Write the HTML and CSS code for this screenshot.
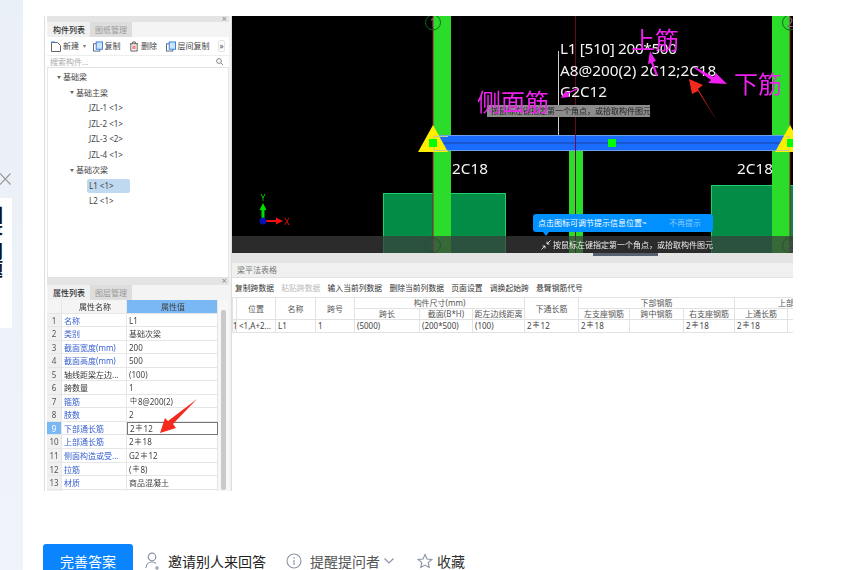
FILE: index.html
```html
<!doctype html>
<html lang="zh-CN">
  <head>
    <meta charset="UTF-8" />
    <meta name="viewport" content="width=device-width, initial-scale=1.0" />
    <title>完善答案</title>
    <link rel="stylesheet" href="styles.css">
  </head>
  <body>
    <div class="page">
      <aside class="side">
        <svg class="side-close" width="11" height="12" viewBox="0 0 11 12"><path d="M0 .5l10.500 11M10.500 .5L0 11.500" stroke="#999" stroke-width="1.100"/></svg>
        <div class="side-card"><span class="side-title">回答问题</span></div>
      </aside>

      <main class="main">
        <div class="shot">
          <!-- left column -->
          <div class="left-col">
            <section class="tree-panel">
              <div class="panel-grip"><span class="grip-x">×</span></div>
              <div class="tabs">
                <span class="tab tab-on">构件列表</span>
                <span class="tab">图纸管理</span>
              </div>
              <div class="tools">
                <span class="tool">
                  <svg width="10" height="11" viewBox="0 0 10 11"><path d="M.5 1.500h6l3 3v6h-9z" fill="#fff" stroke="#666"/><path d="M0 1h4" stroke="#2a8ae0"/></svg>
                  新建
                </span>
                <span class="tool-drop">▾</span>
                <span class="tool">
                  <svg width="10" height="11" viewBox="0 0 11 11"><rect x="0.5" y="2.5" width="7" height="8" fill="#fff" stroke="#567"/><rect x="3.5" y="0.5" width="7" height="8" fill="#cfe3fa" stroke="#2a7ae0"/></svg>
                  复制
                </span>
                <span class="tool">
                  <svg width="10" height="11" viewBox="0 0 11 11"><path d="M1 2.500h9M4 2.500v-2h3v2M2 2.500v8h7v-8" fill="none" stroke="#555"/><path d="M4.500 4.500v4M6.500 4.500v4" stroke="#d22"/></svg>
                  删除
                </span>
                <span class="tool">
                  <svg width="10" height="11" viewBox="0 0 11 11"><rect x="0.5" y="2.5" width="7" height="8" fill="#fff" stroke="#567"/><rect x="3.5" y="0.5" width="7" height="8" fill="#cfe3fa" stroke="#2a7ae0"/></svg>
                  层间复制
                </span>
                <span class="tool-more">»</span>
              </div>
              <div class="search">
                <span>搜索构件...</span>
                <svg width="7" height="7" viewBox="0 0 7 7"><circle cx="3" cy="3" r="2.400" fill="none" stroke="#888"/><path d="M5 5l2 2" stroke="#888"/></svg>
              </div>
              <ul class="tree">
                <li class="lv1"><i class="caret"></i>基础梁</li>
                <li class="lv2"><i class="caret"></i>基础主梁</li>
                <li class="lv3"><span>JZL-1 &lt;1&gt;</span></li>
                <li class="lv3"><span>JZL-2 &lt;1&gt;</span></li>
                <li class="lv3"><span>JZL-3 &lt;2&gt;</span></li>
                <li class="lv3"><span>JZL-4 &lt;1&gt;</span></li>
                <li class="lv2"><i class="caret"></i>基础次梁</li>
                <li class="lv3"><span class="picked">L1 &lt;1&gt;</span></li>
                <li class="lv3"><span>L2 &lt;1&gt;</span></li>
              </ul>
            </section>

            <section class="prop-panel">
              <div class="panel-grip prop-grip"><span class="grip-x">×</span></div>
              <div class="tabs">
                <span class="tab tab-on">属性列表</span>
                <span class="tab">图层管理</span>
              </div>
              <div class="prop-body">
                <div class="prop-grid">
                  <div class="c-num c-head"></div>
                  <div class="c-name c-head">属性名称</div>
                  <div class="c-val c-head-blue">属性值</div>

                  <div class="c-num">1</div><div class="c-name link">名称</div><div class="c-val">L1</div>
                  <div class="c-num">2</div><div class="c-name link">类别</div><div class="c-val">基础次梁</div>
                  <div class="c-num">3</div><div class="c-name link">截面宽度(mm)</div><div class="c-val">200</div>
                  <div class="c-num">4</div><div class="c-name link">截面高度(mm)</div><div class="c-val">500</div>
                  <div class="c-num">5</div><div class="c-name">轴线距梁左边...</div><div class="c-val">(100)</div>
                  <div class="c-num">6</div><div class="c-name">跨数量</div><div class="c-val">1</div>
                  <div class="c-num">7</div><div class="c-name link">箍筋</div><div class="c-val"><small>中</small>8@200(2)</div>
                  <div class="c-num">8</div><div class="c-name link">肢数</div><div class="c-val">2</div>
                  <div class="c-num c-num-on">9</div><div class="c-name link">下部通长筋</div><div class="c-val c-val-on">2<small>丰</small>12</div>
                  <div class="c-num">10</div><div class="c-name link">上部通长筋</div><div class="c-val">2<small>丰</small>18</div>
                  <div class="c-num">11</div><div class="c-name link">侧面构造或受...</div><div class="c-val">G2<small>丰</small>12</div>
                  <div class="c-num">12</div><div class="c-name link">拉筋</div><div class="c-val">(<small>丰</small>8)</div>
                  <div class="c-num">13</div><div class="c-name link">材质</div><div class="c-val">商品混凝土</div>
                  <div class="c-num"></div><div class="c-name"></div><div class="c-val"></div>
                </div>
                <div class="prop-scroll"><div class="prop-thumb"></div></div>
              </div>
              <svg class="prop-arrow" width="40" height="36" viewBox="0 0 40 36"><path d="M38 1L14 26l3 4L1 35l5-15 3 3z" fill="#f42a1e"/></svg>
            </section>
          </div>

          <!-- right column -->
          <div class="right-col">
            <div class="cad">
              <svg class="cad-svg" width="562" height="237" viewBox="231 16 562 237">
                <rect x="231" y="16" width="562" height="237" fill="#000"/>
                <rect x="383.500" y="193.500" width="122" height="60" fill="#038c45" stroke="#1fd068"/>
                <rect x="711.500" y="185.500" width="82" height="68" fill="#038c45" stroke="#1fd068"/>
                <rect x="433" y="16" width="18" height="237" fill="#2bdc2b"/>
                <rect x="772" y="16" width="18" height="237" fill="#2bdc2b"/>
                <rect x="569" y="151" width="14" height="102" fill="#2bdc2b"/>
                <path d="M433 16v237M790 16v237" stroke="#a01030"/>
                <path d="M575.500 16v237" stroke="#6a0a1a"/>
                <path d="M558.500 51v84" stroke="#ccc"/>
                <circle cx="433" cy="22.500" r="7.500" fill="none" stroke="#0c6a1c"/>
                <text class="cad-axis" x="433" y="27" text-anchor="middle">1</text>
                <circle cx="790" cy="22.500" r="7.500" fill="none" stroke="#0c6a1c"/>
                <text class="cad-axis" x="790" y="27" text-anchor="middle">2</text>
                <circle cx="433" cy="245.500" r="7.500" fill="none" stroke="#0c6a1c"/>
                <text class="cad-axis" x="433" y="250" text-anchor="middle">1</text>
                <circle cx="790" cy="245.500" r="7.500" fill="none" stroke="#0c6a1c"/>
                <text class="cad-axis" x="790" y="250" text-anchor="middle">2</text>

                <rect x="434.500" y="135.500" width="360" height="15" fill="#1a6cff" stroke="#6aa0e8"/>
                <path d="M434 143h360" stroke="#14409a"/>
                <path d="M575.500 135v16" stroke="#6a0a5a"/>
                <path d="M433 125l15 27h-30z" fill="#ffee00"/>
                <path d="M790 125l15 27h-30z" fill="#ffee00"/>
                <path d="M448 136.500h-14v14h14" fill="none" stroke="#b8c8a0"/>
                <path d="M776 150.500h13v-14h-3" fill="none" stroke="#b8c8a0"/>
                <rect x="429" y="139" width="8" height="8" fill="#00ff00"/>
                <rect x="608" y="139" width="8" height="8" fill="#00ff00"/>
                <rect x="787" y="139" width="8" height="8" fill="#00ff00"/>

                <text class="cad-note" x="452" y="174">2C18</text>
                <text class="cad-note" x="737" y="174">2C18</text>
                <text class="cad-note" x="560" y="54" textLength="117">L1 [510] 200*500</text>
                <text class="cad-note" x="560" y="76">A8@200(2) 2C12;2C18</text>
                <text class="cad-note" x="560" y="97">G2C12</text>

                <rect x="487" y="105" width="163" height="12" fill="#8c8c8c"/>
                <text class="cad-hint" x="491" y="114">按鼠标左键指定第一个角点，或拾取构件图元</text>

                <text class="cad-mark" x="477" y="111">侧面筋</text>
                <text class="cad-mark" x="631" y="49">上筋</text>
                <text class="cad-mark" x="734" y="93">下筋</text>
                <path d="M658 75l-5-13 3-1-6-10-2 13 3-1 5 13zM695 67l19 10 2-4 11 11-19-1 3-3-17-12zM578 89l-10 5 1 3-8 1 5-8 1 3 10-5z" fill="#f01ef0"/>
                <path d="M717 121L698 91l-6 3-3-15 14 6-5 4z" fill="#f42a1e"/>

                <path d="M263 221v-13" stroke="#00e000" stroke-width="3"/>
                <path d="M263 203l3.500 7h-7z" fill="#00e000"/>
                <path d="M263 221h14" stroke="#f01010" stroke-width="2"/>
                <path d="M283 221l-7 3.500v-7z" fill="#f01010"/>
                <circle cx="263" cy="221" r="3.500" fill="#0a10b0"/>
                <text class="cad-y" x="263" y="201" text-anchor="middle">Y</text>
                <text class="cad-x" x="287" y="225" text-anchor="middle">X</text>
              </svg>
              <div class="status">
                <svg width="10" height="10" viewBox="0 0 10 10"><path d="M9.500 .5L6 4M6 1.500V4h2.500M.5 9.500L4 6M1.500 6H4v2.500" fill="none" stroke="#fff" stroke-width=".8"/></svg>
                <span>按鼠标左键指定第一个角点，或拾取构件图元</span>
              </div>
              <div class="tip">
                <span>点击图标可调节提示信息位置~</span>
                <span class="tip-off">不再提示</span>
              </div>
            </div>

            <div class="split"><span class="split-thumb"></span></div>
            <div class="grid-title">梁平法表格</div>
            <div class="grid-tools">
              <span>复制跨数据</span>
              <span class="off">粘贴跨数据</span>
              <span>输入当前列数据</span>
              <span>删除当前列数据</span>
              <span>页面设置</span>
              <span>调换起始跨</span>
              <span>悬臂钢筋代号</span>
            </div>
            <table class="beam">
              <colgroup>
                <col class="w4"><col class="w39"><col class="w40"><col class="w39">
                <col class="w65"><col class="w53"><col class="w52"><col class="w54">
                <col class="w51"><col class="w54"><col class="w51"><col class="w53"><col class="w6">
              </colgroup>
              <tr class="head">
                <th rowspan="2"></th>
                <th rowspan="2" class="big">位置</th>
                <th rowspan="2" class="big">名称</th>
                <th rowspan="2" class="big">跨号</th>
                <th colspan="3">构件尺寸(mm)</th>
                <th rowspan="2" class="big">下通长筋</th>
                <th colspan="3">下部钢筋</th>
                <th colspan="2" class="cut">上部钢筋</th>
              </tr>
              <tr class="head">
                <th>跨长</th><th>截面(B*H)</th><th>距左边线距离</th>
                <th>左支座钢筋</th><th>跨中钢筋</th><th>右支座钢筋</th>
                <th>上通长筋</th><th></th>
              </tr>
              <tr class="data">
                <td>1</td><td>&lt;1,A+2...</td><td>L1</td><td>1</td>
                <td>(5000)</td><td>(200*500)</td><td>(100)</td>
                <td>2<small>丰</small>12</td><td>2<small>丰</small>18</td><td></td>
                <td>2<small>丰</small>18</td><td>2<small>丰</small>18</td><td></td>
              </tr>
            </table>
          </div>
        </div>

        <div class="actions">
          <button class="btn-main">完善答案</button>
          <span class="act act-invite">
            <svg width="16" height="18" viewBox="0 0 16 18"><circle cx="7" cy="5" r="3.800" fill="none" stroke="#8a93a5" stroke-width="1.200"/><path d="M1 16c0-4 3-6 6-6 1.500 0 3 .5 4 1.500M12 14v4M10 16h4" fill="none" stroke="#8a93a5" stroke-width="1.200"/></svg>
            邀请别人来回答
          </span>
          <span class="act act-remind">
            <svg width="16" height="16" viewBox="0 0 16 16"><circle cx="8" cy="8" r="7" fill="none" stroke="#8a93a5" stroke-width="1.100"/><path d="M8 7v5M8 4v1.500" stroke="#8a93a5" stroke-width="1.100"/></svg>
            提醒提问者
            <svg class="act-chevron" width="10" height="6" viewBox="0 0 10 6"><path d="M.5 .5L5 5 9.500 .5" fill="none" stroke="#8a93a5" stroke-width="1.100"/></svg>
          </span>
          <span class="act act-fav">
            <svg width="16" height="16" viewBox="0 0 16 16"><path d="M8 1.500l2 4.500 4.800.5-3.600 3.200 1 4.800L8 12.100 3.800 14.500l1-4.800L1.200 6.500 6 6z" fill="none" stroke="#8a93a5" stroke-width="1.100"/></svg>
            收藏
          </span>
        </div>
      </main>
    </div>
  </body>
</html>
```

FILE: styles.css
```css
* {
  box-sizing: border-box;
}

html,
body {
  margin: 0;
  padding: 0;
  height: 570px;
  overflow: hidden;
  background: #fff;
  font-family: "Noto Sans", "Noto Sans CJK SC", sans-serif;
  color: #333;
}

.page {
  display: flex;
  height: 570px;
  overflow: hidden;
}

/* left strip */
.side {
  width: 23px;
  flex: none;
  padding-top: 173px;
  background: linear-gradient(180deg, #eaf0f8, #f0f3f9);
  overflow: hidden;
}

.side-close {
  display: block;
}

.side-card {
  width: 12px;
  height: 130px;
  margin-top: 13px;
  padding-top: 8px;
  background: #fff;
  overflow: hidden;
}

.side-title {
  display: block;
  width: 18px;
  height: 74px;
  margin-left: -16px;
  writing-mode: vertical-rl;
  font-size: 18px;
  line-height: 18px;
  font-weight: 700;
  color: #111;
}

.main {
  flex: 1;
  padding: 16px 0 0 20px;
}

/* pasted screenshot */
.shot {
  display: flex;
  width: 750px;
  height: 475px;
  margin-left: 1px;
  overflow: hidden;
  font-size: 8px;
  line-height: 12px;
  filter: blur(0.35px);
}

.left-col {
  width: 187px;
  flex: none;
  padding-left: 2px;
  border-left: 1px solid #ddd;
  border-right: 2px solid #f2f2f2;
  display: flex;
  flex-direction: column;
}

.tree-panel {
  height: 262px;
  flex: none;
  display: flex;
  flex-direction: column;
  border-bottom: 1px solid #e2e2e2;
}

.panel-grip {
  height: 6px;
  flex: none;
  position: relative;
  background: #e4e4e4;
}

.prop-grip {
  height: 7px;
}

.grip-x {
  position: absolute;
  right: 2px;
  top: -3px;
  font-size: 9px;
  color: #888;
}

.tabs {
  display: flex;
  height: 15px;
  flex: none;
  padding-left: 1px;
  background: #f4f4f4;
}

.tab {
  width: 42px;
  text-align: center;
  line-height: 15px;
  color: #999;
  background: #ddd;
}

.tab-on {
  color: #333;
  font-weight: 500;
  background: #f0f0f0;
}

.tools {
  display: flex;
  align-items: center;
  height: 18px;
  flex: none;
  padding-left: 4px;
  color: #444;
  background: #fff;
}

.tool {
  display: flex;
  align-items: center;
  gap: 2px;
  margin-right: 8.500px;
}

.tool-drop {
  margin: 0 7px 0 -5px;
  font-size: 6px;
  color: #777;
}

.tool-more {
  width: 7px;
  height: 12px;
  border: 1px solid #e4e4e4;
  border-radius: 2px;
  font-size: 8px;
  line-height: 9px;
  text-align: center;
}

.search {
  display: flex;
  align-items: center;
  justify-content: space-between;
  height: 13px;
  flex: none;
  padding: 0 6px 0 3px;
  border-top: 1px solid #eee;
  border-bottom: 1px solid #e2e2e2;
  color: #aaa;
  background: #fff;
}

.tree {
  flex: 1;
  list-style: none;
  margin: 0;
  padding: 1.500px 0 0;
  background: #fff;
  border-left: 1px solid #e8e8e8;
  border-right: 1px solid #e8e8e8;
}

.tree li {
  display: flex;
  align-items: center;
  height: 15.500px;
  color: #444;
}

.lv1 {
  padding-left: 9px;
}

.lv2 {
  padding-left: 22px;
}

.lv3 {
  padding-left: 39px;
}

.lv3 span {
  display: block;
  min-width: 43px;
  padding-left: 2px;
  height: 14px;
  line-height: 14px;
  border-radius: 2px;
}

.lv3 .picked {
  background: #c0d8f0;
}

.caret {
  width: 0;
  height: 0;
  margin-right: 2px;
  border-left: 2px solid transparent;
  border-right: 2px solid transparent;
  border-top: 3px solid #666;
}

/* property list */
.prop-panel {
  flex: 1;
  position: relative;
  overflow: hidden;
}

.prop-body {
  display: flex;
  background: #fff;
}

.prop-grid {
  display: grid;
  grid-template-columns: 15px 65px 91px;
  grid-auto-rows: 13.550px;
  width: 171px;
  flex: none;
  line-height: 14px;
}

.prop-grid > div {
  border-right: 1px solid #e6e6e6;
  border-bottom: 1px solid #e6e6e6;
  white-space: nowrap;
  overflow: hidden;
}

.c-num {
  text-align: center;
  color: #555;
  background: #f0f0f0;
}

.prop-grid .c-num-on {
  color: #fff;
  background: #7ab8f5;
}

.c-head {
  text-align: center;
  background: #f4f4f4;
}

.c-head-blue {
  text-align: center;
  color: #fff;
  background: #7ab8f5;
}

.c-name {
  padding-left: 2px;
}

.link {
  color: #3a62d0;
}

.c-val {
  padding-left: 2px;
  color: #444;
}

.prop-grid .c-val-on {
  border: 1px solid #777;
  line-height: 12px;
}

small {
  position: relative;
  top: -1.500px;
  margin: 0 1px;
  font-size: 7px;
}

.prop-scroll {
  flex: 1;
  padding: 10px 3px 0;
  background: #f7f7f7;
}

.prop-thumb {
  height: 180px;
  background: #c9c9c9;
  border-radius: 2px;
}

.prop-arrow {
  position: absolute;
  left: 112px;
  top: 120px;
}

/* cad view */
.right-col {
  width: 562px;
  flex: none;
  display: flex;
  flex-direction: column;
  background: #fff;
  border-left: 1px solid #ddd;
  overflow: hidden;
}

.cad {
  position: relative;
  height: 237px;
  flex: none;
  margin-left: -1px;
  overflow: hidden;
}

.cad-svg {
  display: block;
}

.cad-note {
  font-family: "Noto Sans", sans-serif;
  font-size: 15.300px;
  fill: #f4f4f4;
}

.cad-axis {
  font-family: "Noto Sans", sans-serif;
  font-size: 12px;
  fill: #777;
}

.cad-hint {
  font-family: "Noto Sans CJK SC", sans-serif;
  font-size: 8px;
  fill: #222;
}

.cad-mark {
  font-family: "Noto Sans CJK SC", sans-serif;
  font-size: 24px;
  font-weight: 400;
  fill: #ee22ee;
}

.cad-y {
  font-size: 8px;
  fill: #00e000;
}

.cad-x {
  font-size: 9px;
  fill: #f01010;
}

.status {
  position: absolute;
  left: 0;
  right: 0;
  bottom: 0;
  display: flex;
  align-items: center;
  gap: 2px;
  height: 17px;
  padding-left: 310px;
  color: #eee;
  background: rgba(60, 60, 60, 0.72);
}

.tip {
  position: absolute;
  left: 302px;
  top: 198px;
  display: flex;
  justify-content: space-between;
  width: 180px;
  height: 18px;
  padding: 0 12px 0 5px;
  line-height: 18px;
  color: #fff;
  background: #0090ff;
  border-radius: 3px;
}

.tip::after {
  content: "";
  position: absolute;
  left: 10px;
  top: 18px;
  border-left: 3px solid transparent;
  border-right: 3px solid transparent;
  border-top: 4px solid #0090ff;
}

.tip-off {
  color: #8ccaff;
}

/* beam table */
.split {
  height: 10px;
  flex: none;
  background: #e4e4e4;
}

.split-thumb {
  display: block;
  width: 65px;
  height: 3px;
  margin-left: 361px;
  background: #566070;
}

.grid-title {
  height: 15px;
  flex: none;
  padding-left: 5px;
  line-height: 14px;
  color: #777;
  background: #f0f0f0;
  border-bottom: 1px solid #e2e2e2;
}

.grid-tools {
  display: flex;
  gap: 7.300px;
  align-items: center;
  height: 19px;
  flex: none;
  padding-left: 3px;
  font-size: 7.800px;
  color: #333;
}

.grid-tools .off {
  color: #bbb;
}

.beam {
  table-layout: fixed;
  width: 561px;
  border-collapse: collapse;
  font-size: 8px;
  line-height: 10px;
}

.w4 { width: 4px; }
.w6 { width: 6px; }
.w39 { width: 39px; }
.w40 { width: 40px; }
.w51 { width: 51px; }
.w52 { width: 52px; }
.w53 { width: 53px; }
.w54 { width: 54px; }
.w65 { width: 65px; }

.beam th,
.beam td {
  padding: 0;
  border: 1px solid #e2e2e2;
  white-space: nowrap;
  overflow: hidden;
}

.beam th {
  height: 10.500px;
  font-weight: 400;
  color: #555;
  text-align: center;
}

.beam .big {
  font-size: 8px;
}

.beam .cut {
  text-align: left;
  padding-left: 43px;
}

.beam td {
  height: 13px;
  padding-left: 2px;
  color: #444;
}

.beam td:first-child {
  padding-left: 0;
}

.beam .data td:first-child {
  background: #f4f4f4;
}

/* actions under the picture */
.actions {
  display: flex;
  align-items: center;
  height: 34px;
  margin: 53px 0 0 0;
  font-size: 14px;
}

.btn-main {
  width: 90px;
  height: 34px;
  padding: 0;
  border: none;
  border-radius: 3px;
  background: #0a84ff;
  color: #fff;
  font: inherit;
}

.act {
  display: flex;
  align-items: center;
  gap: 7px;
}

.act-invite {
  margin-left: 12px;
  color: #222;
}

.act-remind {
  margin-left: 20px;
  gap: 8px;
  color: #555;
}

.act-chevron {
  margin-left: -4px;
}

.act-fav {
  margin-left: 23px;
  gap: 4px;
  color: #333;
}
```
